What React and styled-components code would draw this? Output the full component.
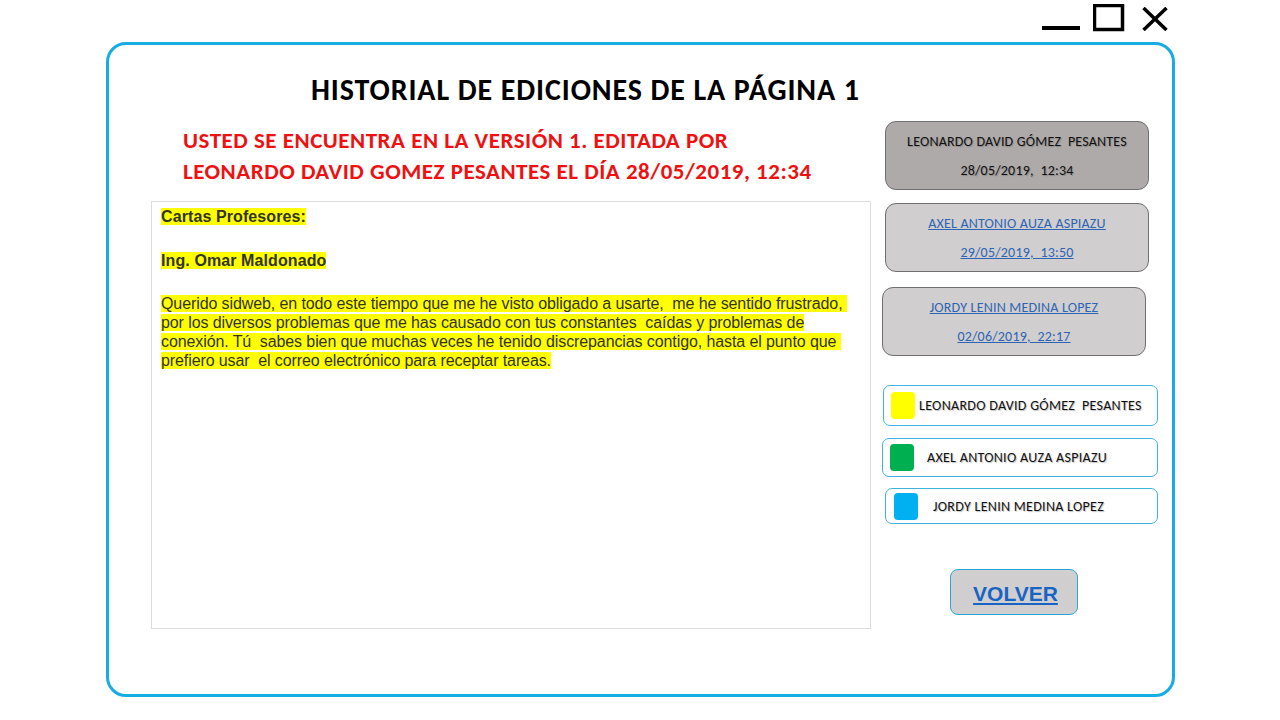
import React from 'react';
import styled, { createGlobalStyle } from 'styled-components';

const GlobalStyle = createGlobalStyle`
  html, body {
    margin: 0;
    padding: 0;
    background: #ffffff;
  }
  * {
    box-sizing: border-box;
  }
`;

const CALIBRI = `Carlito, Lato, "Open Sans", sans-serif`;
const ARIAL = `"Liberation Sans", Arial, sans-serif`;

const Page = styled.div`
  width: 1280px;
  height: 720px;
  overflow: hidden;
  background: #ffffff;
`;

const TopBar = styled.div`
  height: 42px;
  display: flex;
  justify-content: flex-end;
  align-items: flex-start;
  padding-right: 112px;
`;

const WinButton = styled.svg`
  display: block;
  margin-top: ${props => props.$top || 0}px;
  margin-left: ${props => props.$gap || 0}px;
`;

const Frame = styled.div`
  margin-left: 106px;
  width: 1069px;
  height: 655px;
  border: 3px solid #17ade2;
  border-radius: 20px;
  padding: 0 14px 0 42px;
`;

const Title = styled.h1`
  margin: 0 0 14px 0;
  padding: 28px 0 0 160px;
  font-family: ${CALIBRI};
  font-weight: 700;
  font-size: 30px;
  letter-spacing: 0.9px;
  line-height: 34px;
  color: #000000;
  white-space: nowrap;
`;

const Columns = styled.div`
  display: flex;
  gap: 11px;
`;

const Left = styled.div`
  width: 720px;
  display: flex;
  flex-direction: column;
`;

const Notice = styled.p`
  margin: 4px 0 14px 32px;
  font-family: ${CALIBRI};
  font-weight: 700;
  font-size: 23px;
  letter-spacing: 0.5px;
  line-height: 31px;
  color: #ee1111;
  white-space: nowrap;
`;

const Editor = styled.div`
  height: 428px;
  border: 1px solid #dcdcdc;
  padding: 5px 9px 4px;
  font-family: ${ARIAL};
  font-size: 16px;
  line-height: 19px;
  color: #333322;
`;

const Para = styled.p`
  margin: 0 0 ${props => props.$after || 0}px 0;
  font-weight: ${props => (props.$bold ? 700 : 400)};
  white-space: nowrap;
`;

const Mark = styled.span`
  background: #ffff00;
  letter-spacing: ${props => (props.$wide ? '0.1px' : '-0.1px')};
`;

const Right = styled.div`
  width: 276px;
  display: flex;
  flex-direction: column;
`;

const VersionCard = styled.div`
  margin-top: ${props => props.$top}px;
  margin-left: ${props => props.$left}px;
  width: 264px;
  height: 69px;
  border: 1px solid #6f6f6f;
  border-radius: 11px;
  background: ${props => (props.$current ? '#aeaaaa' : '#d0cece')};
  display: flex;
  flex-direction: column;
  align-items: center;
  justify-content: center;
  font-family: ${CALIBRI};
  font-size: 14px;
  letter-spacing: 0.2px;
  line-height: 29px;
  white-space: pre;
  color: ${props => (props.$current ? '#111111' : '#2e64b4')};
  text-decoration: ${props => (props.$current ? 'none' : 'underline')};
  text-shadow: ${props => (props.$current ? '1px 1px 1px rgba(0,0,0,0.2)' : 'none')};
`;

const LegendItem = styled.div`
  margin-top: ${props => props.$top}px;
  margin-left: ${props => props.$left}px;
  width: ${props => props.$width}px;
  height: ${props => props.$height}px;
  border: 1px solid #3fb3dd;
  border-radius: 7px;
  display: flex;
  align-items: center;
  padding-left: ${props => props.$pad}px;
  gap: ${props => props.$gap}px;
  font-family: ${CALIBRI};
  font-size: 14px;
  letter-spacing: 0.3px;
  white-space: pre;
  color: #111111;
  text-shadow: 1px 1px 1px rgba(0, 0, 0, 0.25);
`;

const Swatch = styled.span`
  width: 24px;
  height: 27px;
  border-radius: 4px;
  background: ${props => props.$color};
  flex-shrink: 0;
`;

const BackButton = styled.button`
  margin: 45px 0 0 68px;
  width: 128px;
  height: 46px;
  border: 1px solid #2aa7d8;
  border-radius: 8px;
  background: #d0cece;
  font-family: ${ARIAL};
  font-weight: 700;
  font-size: 21px;
  color: #1864c4;
  text-decoration: underline;
  padding: 3px 0 0 3px;
  cursor: pointer;
`;

const versions = [
  { name: 'LEONARDO DAVID GÓMEZ  PESANTES', date: '28/05/2019,  12:34', current: true, top: 0, left: 3 },
  { name: 'AXEL ANTONIO AUZA ASPIAZU', date: '29/05/2019,  13:50', top: 13, left: 3 },
  { name: 'JORDY LENIN MEDINA LOPEZ', date: '02/06/2019,  22:17', top: 15, left: 0 },
];

const legend = [
  { name: 'LEONARDO DAVID GÓMEZ  PESANTES', color: '#ffff00', top: 29, left: 1, width: 275, height: 41, pad: 7, gap: 4 },
  { name: 'AXEL ANTONIO AUZA ASPIAZU', color: '#00b050', top: 12, left: 0, width: 276, height: 39, pad: 7, gap: 13 },
  { name: 'JORDY LENIN MEDINA LOPEZ', color: '#00b0f0', top: 11, left: 3, width: 273, height: 36, pad: 8, gap: 15 },
];

const App = () => {
  return (
    <Page>
      <GlobalStyle />
      <TopBar>
        <WinButton width="38" height="31" viewBox="0 0 38 31">
          <rect x="0" y="26" width="38" height="4" fill="#000" />
        </WinButton>
        <WinButton width="32" height="28" viewBox="0 0 32 28" $top={4} $gap={13}>
          <rect x="1.5" y="1.5" width="28" height="24" fill="none" stroke="#000" strokeWidth="3.5" />
        </WinButton>
        <WinButton width="26" height="24" viewBox="0 0 26 24" $top={7} $gap={17}>
          <path d="M1.5 1 L24.5 23 M24.5 1 L1.5 23" stroke="#000" strokeWidth="3.5" />
        </WinButton>
      </TopBar>
      <Frame>
        <Title>HISTORIAL DE EDICIONES DE LA PÁGINA 1</Title>
        <Columns>
          <Left>
            <Notice>
              USTED SE ENCUENTRA EN LA VERSIÓN 1. EDITADA POR
              <br />
              LEONARDO DAVID GOMEZ PESANTES EL DÍA 28/05/2019, 12:34
            </Notice>
            <Editor>
              <Para $bold $after={25}><Mark $wide>Cartas Profesores:</Mark></Para>
              <Para $bold $after={24}><Mark $wide>Ing. Omar Maldonado</Mark></Para>
              <Para>
                <Mark>Querido sidweb, en todo este tiempo que me he visto obligado a usarte,&nbsp; me he sentido frustrado,&nbsp;</Mark>
                <br />
                <Mark>por los diversos problemas que me has causado con tus constantes&nbsp; caídas y problemas de</Mark>
                <br />
                <Mark>conexión. Tú&nbsp; sabes bien que muchas veces he tenido discrepancias contigo, hasta el punto que&nbsp;</Mark>
                <br />
                <Mark>prefiero usar&nbsp; el correo electrónico para receptar tareas.</Mark>
              </Para>
            </Editor>
          </Left>
          <Right>
            {versions.map(v => (
              <VersionCard key={v.name} $current={v.current} $top={v.top} $left={v.left}>
                <span>{v.name}</span>
                <span>{v.date}</span>
              </VersionCard>
            ))}
            {legend.map(l => (
              <LegendItem
                key={l.name}
                $top={l.top}
                $left={l.left}
                $width={l.width}
                $height={l.height}
                $pad={l.pad}
                $gap={l.gap}
              >
                <Swatch $color={l.color} />
                <span>{l.name}</span>
              </LegendItem>
            ))}
            <BackButton>VOLVER</BackButton>
          </Right>
        </Columns>
      </Frame>
    </Page>
  );
};

export default App;
